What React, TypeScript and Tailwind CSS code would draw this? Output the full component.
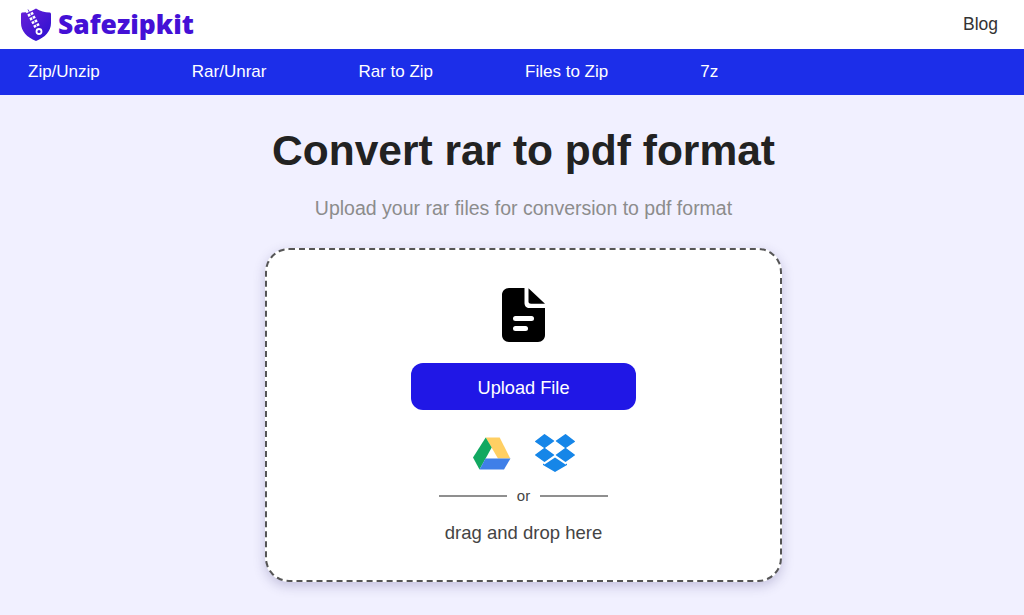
export default function App() {
  const nav = ["Zip/Unzip", "Rar/Unrar", "Rar to Zip", "Files to Zip", "7z"];
  return (
    <div className="min-h-[615px] bg-[#f1f0ff] font-['Liberation_Sans',Arial,sans-serif] overflow-hidden">
      <header className="h-[49px] bg-white flex items-center justify-between pl-[21px] pr-[26px]">
        <div className="flex items-center gap-[7px]">
          <svg width="30" height="33" viewBox="0 0 30 33" aria-hidden="true">
            <defs>
              <linearGradient id="sh" x1="0" y1="0" x2="1" y2="1">
                <stop offset="0" stopColor="#6a1fd8" />
                <stop offset="1" stopColor="#2a10d0" />
              </linearGradient>
            </defs>
            <path d="M15 0.500 C11 3 6 4.500 1.500 4.500 C0.700 4.500 0 5.200 0 6 L0 15 C0 23 6 29.500 15 33 C24 29.500 30 23 30 15 L30 6 C30 5.200 29.300 4.500 28.500 4.500 C24 4.500 19 3 15 0.500 Z" fill="url(#sh)" />
            <path d="M7 1.500 L16.500 19.500" stroke="#fff" strokeWidth="6" strokeDasharray="2.600 1.600" />
            <path d="M7 1.500 L16.500 19.500" stroke="#4a18d6" strokeWidth="0.800" />
            <circle cx="18" cy="23.500" r="2.500" fill="#4a18d6" stroke="#fff" strokeWidth="1.800" />
          </svg>
          <span className="font-['Open_Sans',sans-serif] font-extrabold text-[26.400px] leading-none text-[#4410d6]">Safezipkit</span>
        </div>
        <a className="text-[17.500px] text-[#333333]">Blog</a>
      </header>
      <nav className="h-[46px] bg-[#1c2ee9] flex items-center gap-[92px] pl-[28px] text-white text-[17px]">
        {nav.map((n) => (
          <a key={n}>{n}</a>
        ))}
      </nav>
      <main className="flex flex-col items-center pl-[23px]">
        <h1 className="mt-[31px] text-[42.500px] leading-[50px] font-bold text-[#222222]">Convert rar to pdf format</h1>
        <p className="mt-[20px] text-[19.500px] leading-[24px] text-[#8c8c8c]">Upload your rar files for conversion to pdf format</p>
        <div className="mt-[28px] w-[517px] h-[334px] bg-white border-2 border-dashed border-[#555555] rounded-[24px] shadow-[0_4px_12px_rgba(60,50,120,0.25)] flex flex-col items-center">
          <svg className="mt-[38px]" width="43" height="54" viewBox="0 0 43 54" aria-hidden="true">
            <path d="M7 0 H22.500 V15 C22.500 18 24.500 20 27.500 20 H43 V47 C43 51 40 54 36 54 H7 C3 54 0 51 0 47 V7 C0 3 3 0 7 0 Z" fill="#000" />
            <path d="M26.500 0.300 L43 15.800 H29 C27.500 15.800 26.500 14.800 26.500 13.500 Z" fill="#000" />
            <rect x="11" y="28" width="21" height="5" rx="2.500" fill="#fff" />
            <rect x="11" y="38" width="15" height="5" rx="2.500" fill="#fff" />
          </svg>
          <button className="mt-[21px] w-[225px] h-[47px] pt-[4px] rounded-[12px] bg-[#2017e6] text-white text-[18.200px]">Upload File</button>
          <div className="mt-[24px] flex items-center gap-[24px]">
            <svg width="38" height="33" viewBox="0 0 38 33" aria-hidden="true">
              <path d="M12.700 0.500 H26.700 L37.300 21.500 H25 L18.500 10.500 Z" fill="#ffcf63" />
              <path d="M12.700 0.500 L18.700 10.500 L6.500 32.500 L0 20.500 Z" fill="#11a861" />
              <path d="M12.500 21.500 H37.500 L31 32.500 H6.500 Z" fill="#3f7fe8" />
            </svg>
            <svg width="40" height="38" viewBox="0 0 40 38" aria-hidden="true">
              <path d="M9.500 0.800 L18.400 7 L9.500 13.500 L0.800 7.500 Z M30.500 0.800 L39.200 7.500 L30.500 13.500 L21.600 7 Z M0.800 21 L9.500 14.500 L18.400 21 L9.500 27.200 Z M30.500 14.500 L39.200 21 L30.500 27.200 L21.600 21 Z" fill="#1686e8" stroke="#1686e8" strokeWidth="1.500" strokeLinejoin="round" />
              <path d="M20 23.500 L30.500 30.500 L32 29.500 V31 L20 38 L8 31 V29.500 L9.500 30.500 Z" fill="#1686e8" />
            </svg>
          </div>
          <div className="mt-[14px] flex items-center gap-[10px] text-[15px] leading-[20px] text-[#444444]">
            <span className="w-[68px] h-[2px] bg-[#8f8f8f]" />
            <span>or</span>
            <span className="w-[68px] h-[2px] bg-[#8f8f8f]" />
          </div>
          <p className="mt-[15px] text-[18.500px] leading-[24px] text-[#444444]">drag and drop here</p>
        </div>
      </main>
    </div>
  );
}
